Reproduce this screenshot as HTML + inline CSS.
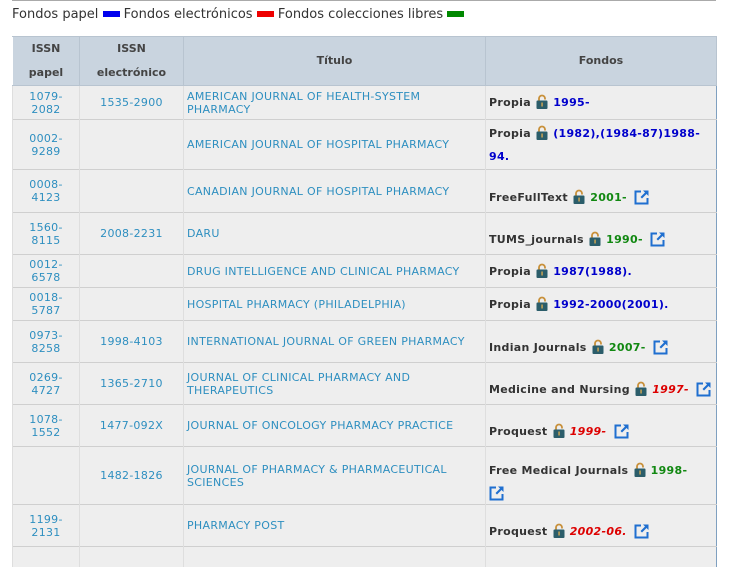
<!DOCTYPE html>
<html><head><meta charset="utf-8"><style>
body{margin:0;background:#fff;font-family:"DejaVu Sans",Verdana,sans-serif;width:731px;height:554px;overflow:hidden;position:relative}
.topline{position:absolute;left:12px;top:0;width:704px;height:1px;background:#aaa}
.legend{position:absolute;left:12px;top:7px;font-size:13px;color:#333;white-space:nowrap}
.sw{display:inline-block;width:17px;height:6px;vertical-align:1px}
table{position:absolute;left:12px;top:36px;border-collapse:collapse;width:704px;table-layout:fixed;font-size:11px}
th{background:#c9d4df;color:#444;font-weight:bold;line-height:24px;border:1px solid #b8c4d0;border-left:1px solid #fff;padding:0}
td{background:#eeeeee;border-top:1px solid #cfcfcf;border-left:1px solid #dedede;padding:0 3px;vertical-align:middle;color:#2e8fc0;line-height:13px;letter-spacing:0.3px}
td.c{text-align:center}
td.f{color:#333;font-weight:bold;line-height:23px;padding-left:3px}
table{border-right:1px solid #7fa0c0;border-left:1px solid #b8c4d0}
.sh{position:relative;top:6px;display:block}
.b{color:#0000cc}.g{color:#118811}.r{color:#dd0000;font-style:italic}
.lk{display:inline-block;width:12px;height:15px;vertical-align:-3px;margin:0 1px}
.ex{display:inline-block;width:16px;height:16px;vertical-align:-4px;margin-left:3px}
</style></head><body>
<div class="topline"></div>
<div class="legend">Fondos papel <span class="sw" style="background:#0000ee"></span> Fondos electrónicos <span class="sw" style="background:#ee0000"></span> Fondos colecciones libres <span class="sw" style="background:#008800"></span></div>
<svg width="0" height="0" style="position:absolute"><defs>
<symbol id="lock" viewBox="0 0 12 15"><path d="M3 7V4.5a3 3 0 0 1 6 0v1" fill="none" stroke="#c8903a" stroke-width="1.8"/><rect x="0.5" y="6.5" width="11" height="8.5" rx="1" fill="#2b5d6a"/><rect x="5.4" y="8.5" width="1.3" height="4" fill="#e0b050"/></symbol>
<symbol id="ext" viewBox="0 0 16 16"><path d="M7 2.5H1.5v12h12V9" fill="none" stroke="#1f6fd0" stroke-width="2"/><path d="M9 1.5h5.5V7L12.5 5 8 9.5 6.5 8 11 3.5z" fill="#1f6fd0"/></symbol>
</defs></svg>
<table>
<colgroup><col style="width:67px"><col style="width:104px"><col style="width:302px"><col style="width:231px"></colgroup>
<tr style="height:49px"><th>ISSN<br>papel</th><th>ISSN<br>electrónico</th><th>Título</th><th>Fondos</th></tr>
<tr style="height:34px"><td class="c">1079-<br>2082</td><td class="c">1535-2900</td><td>AMERICAN JOURNAL OF HEALTH-SYSTEM PHARMACY</td><td class="f">Propia <svg class="lk"><use href="#lock"/></svg> <span class="b">1995-</span></td></tr>
<tr style="height:50px"><td class="c">0002-<br>9289</td><td></td><td>AMERICAN JOURNAL OF HOSPITAL PHARMACY</td><td class="f">Propia <svg class="lk"><use href="#lock"/></svg> <span class="b">(1982),(1984-87)1988-94.</span></td></tr>
<tr style="height:43px"><td class="c">0008-<br>4123</td><td></td><td>CANADIAN JOURNAL OF HOSPITAL PHARMACY</td><td class="f"><span class="sh">FreeFullText <svg class="lk"><use href="#lock"/></svg> <span class="g">2001-</span> <svg class="ex"><use href="#ext"/></svg></span></td></tr>
<tr style="height:42px"><td class="c">1560-<br>8115</td><td class="c">2008-2231</td><td>DARU</td><td class="f"><span class="sh">TUMS_journals <svg class="lk"><use href="#lock"/></svg> <span class="g">1990-</span> <svg class="ex"><use href="#ext"/></svg></span></td></tr>
<tr style="height:33px"><td class="c">0012-<br>6578</td><td></td><td>DRUG INTELLIGENCE AND CLINICAL PHARMACY</td><td class="f">Propia <svg class="lk"><use href="#lock"/></svg> <span class="b">1987(1988).</span></td></tr>
<tr style="height:33px"><td class="c">0018-<br>5787</td><td></td><td>HOSPITAL PHARMACY (PHILADELPHIA)</td><td class="f">Propia <svg class="lk"><use href="#lock"/></svg> <span class="b">1992-2000(2001).</span></td></tr>
<tr style="height:42px"><td class="c">0973-<br>8258</td><td class="c">1998-4103</td><td>INTERNATIONAL JOURNAL OF GREEN PHARMACY</td><td class="f"><span class="sh">Indian Journals <svg class="lk"><use href="#lock"/></svg> <span class="g">2007-</span> <svg class="ex"><use href="#ext"/></svg></span></td></tr>
<tr style="height:42px"><td class="c">0269-<br>4727</td><td class="c">1365-2710</td><td>JOURNAL OF CLINICAL PHARMACY AND THERAPEUTICS</td><td class="f"><span class="sh">Medicine and Nursing <svg class="lk"><use href="#lock"/></svg> <span class="r">1997-</span> <svg class="ex"><use href="#ext"/></svg></span></td></tr>
<tr style="height:42px"><td class="c">1078-<br>1552</td><td class="c">1477-092X</td><td>JOURNAL OF ONCOLOGY PHARMACY PRACTICE</td><td class="f"><span class="sh">Proquest <svg class="lk"><use href="#lock"/></svg> <span class="r">1999-</span> <svg class="ex"><use href="#ext"/></svg></span></td></tr>
<tr style="height:58px"><td></td><td class="c">1482-1826</td><td>JOURNAL OF PHARMACY &amp; PHARMACEUTICAL SCIENCES</td><td class="f"><span class="sh">Free Medical Journals <svg class="lk"><use href="#lock"/></svg> <span class="g">1998-</span><br><svg class="ex" style="margin-left:0"><use href="#ext"/></svg></span></td></tr>
<tr style="height:42px"><td class="c">1199-<br>2131</td><td></td><td>PHARMACY POST</td><td class="f"><span class="sh">Proquest <svg class="lk"><use href="#lock"/></svg> <span class="r">2002-06.</span> <svg class="ex"><use href="#ext"/></svg></span></td></tr>
<tr style="height:20px"><td></td><td></td><td></td><td></td></tr>
</table>
</body></html>
